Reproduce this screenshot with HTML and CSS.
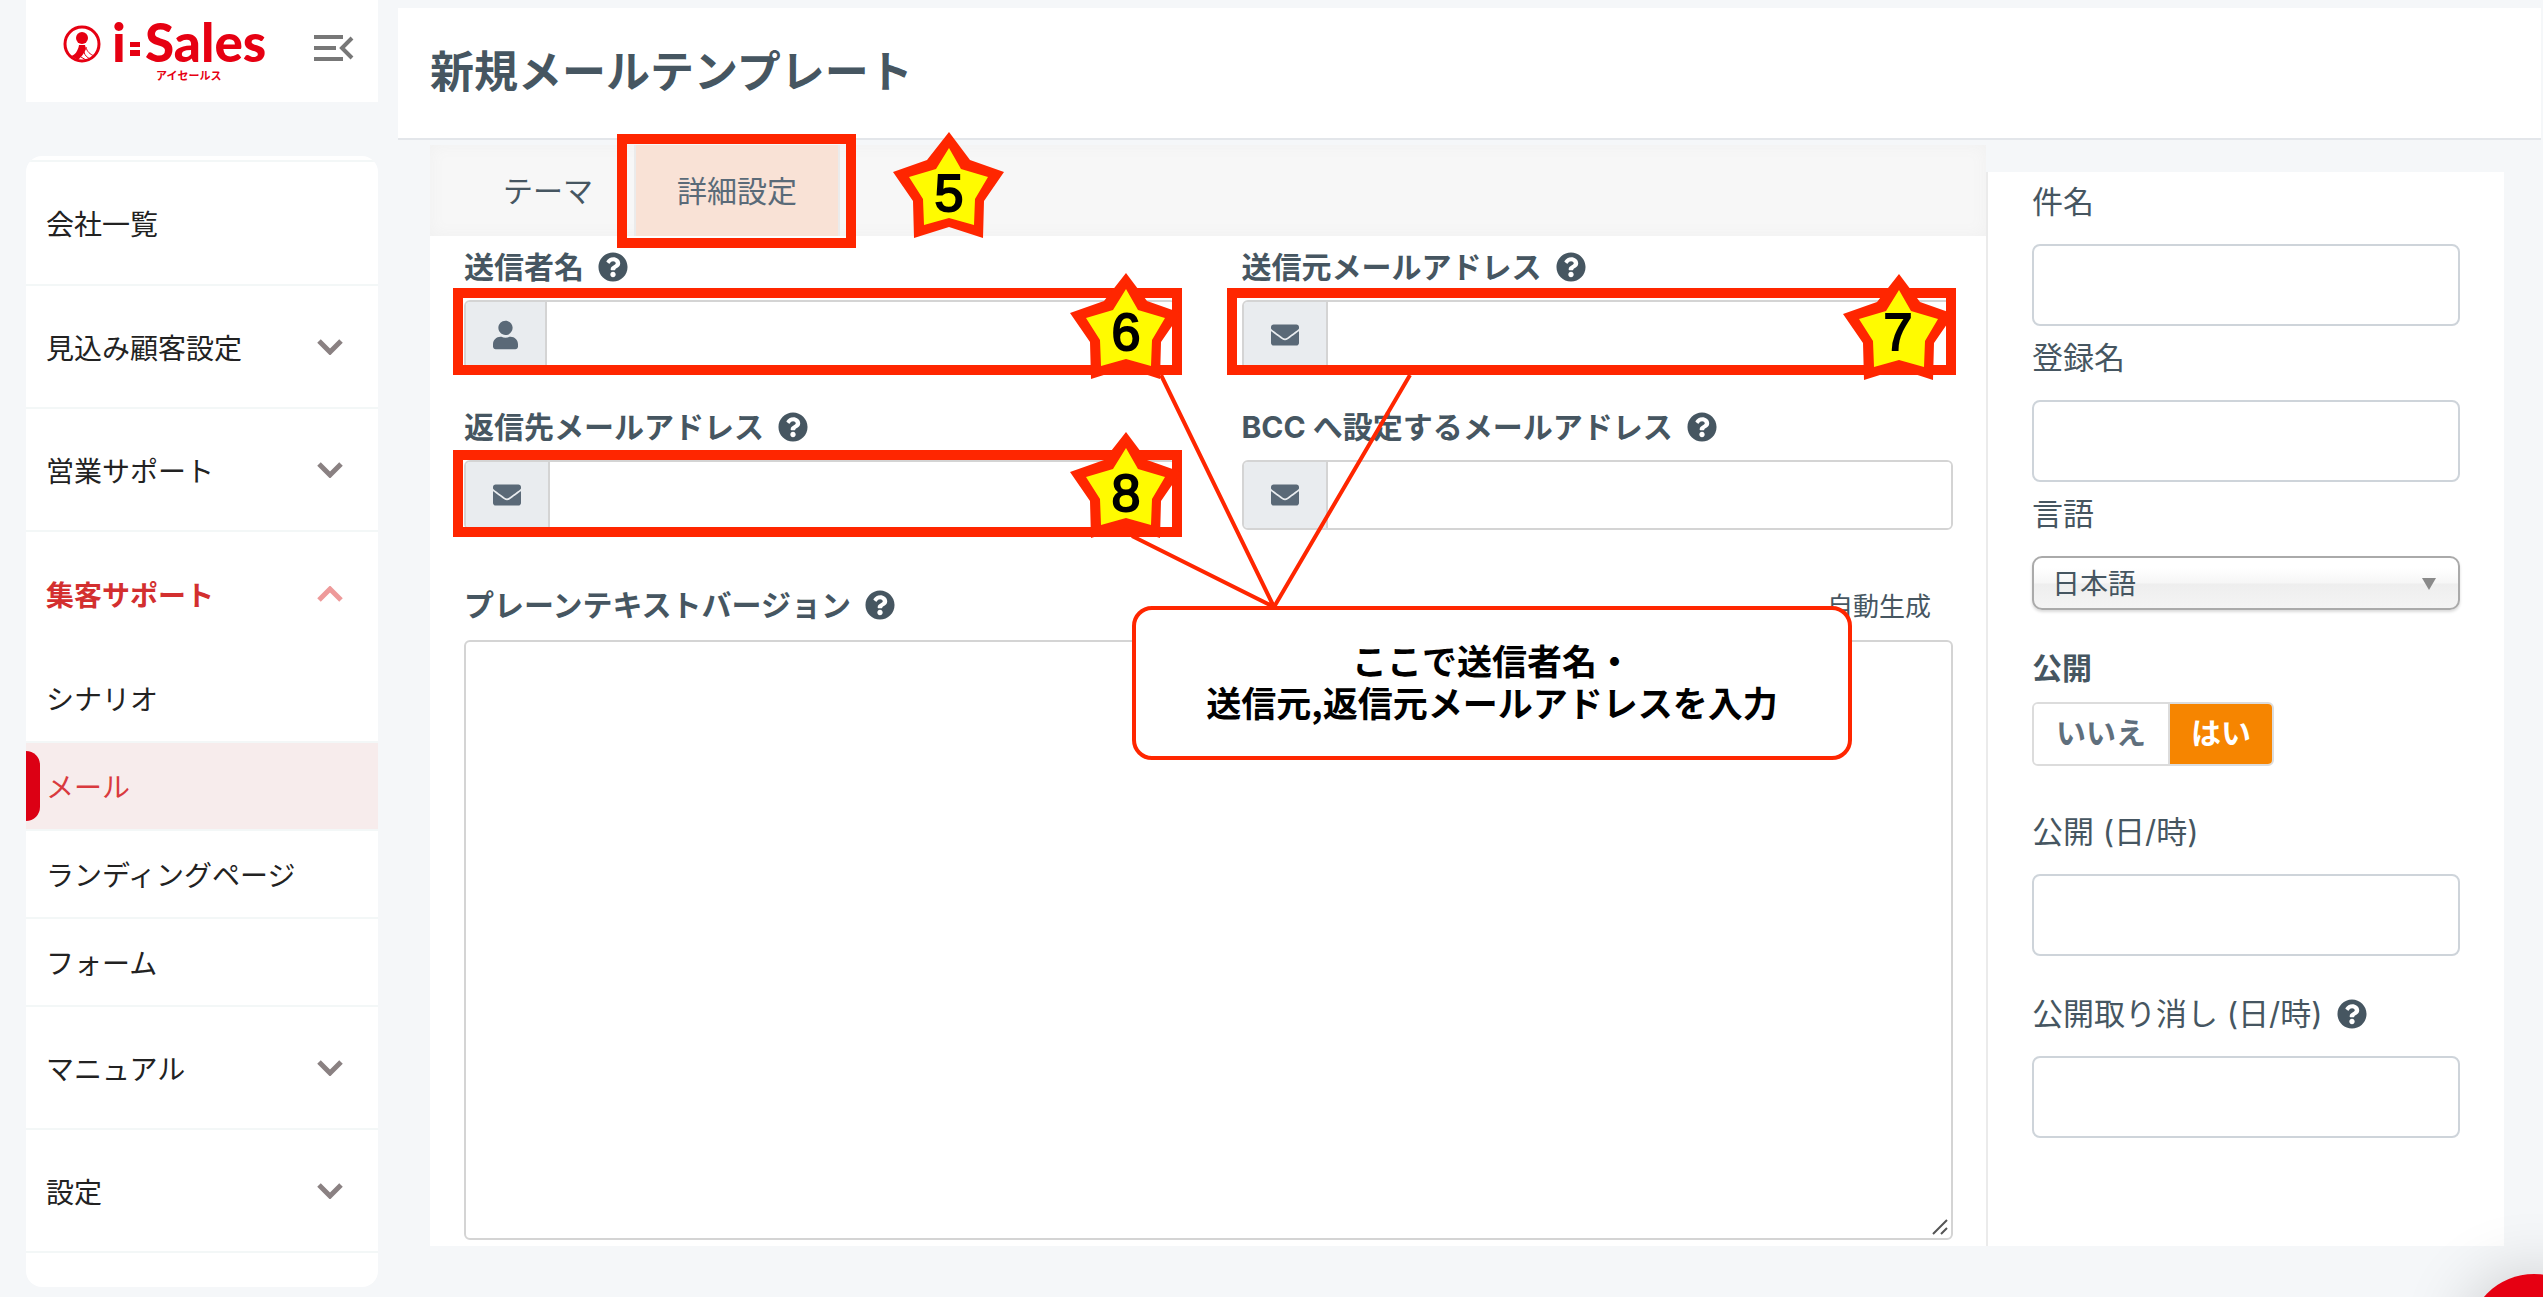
FILE: index.html
```
<!DOCTYPE html>
<html lang="ja">
<head>
    <meta charset="UTF-8">
    <meta name="viewport" content="width=device-width, initial-scale=1.0">
    <title>新規メールテンプレート</title>
    <link rel="stylesheet" href="styles.css">
</head>
<body>
    <!-- shared icons -->
    <svg class="sprite">
        <symbol id="help" viewBox="0 0 512 512">
            <path fill="currentColor" d="M504 256c0 137-111 248-248 248S8 393 8 256 119 8 256 8s248 111 248 248zM262.700 90c-54.500 0-89.300 23-116.500 63.800-3.500 5.300-2.400 12.400 2.700 16.300l34.700 26.300c5.200 3.900 12.600 3 16.700-2.100 17.900-22.700 30.100-35.800 57.300-35.800 20.400 0 45.700 13.100 45.700 33 0 15-12.400 22.700-32.500 34C247.100 238.500 216 254.900 216 296v4c0 6.600 5.400 12 12 12h56c6.600 0 12-5.400 12-12v-1.300c0-28.500 83.200-29.600 83.200-106.700 0-58-60.200-102-116.500-102zM256 338c-25.400 0-46 20.600-46 46s20.600 46 46 46 46-20.600 46-46-20.600-46-46-46z"/>
        </symbol>
        <symbol id="user" viewBox="0 0 448 512">
            <path fill="currentColor" d="M224 256c70.700 0 128-57.300 128-128S294.700 0 224 0 96 57.300 96 128s57.300 128 128 128zm89.600 32h-16.700c-22.200 10.200-46.900 16-72.900 16s-50.600-5.800-72.900-16h-16.700C60.200 288 0 348.200 0 422.400V464c0 26.500 21.500 48 48 48h352c26.500 0 48-21.500 48-48v-41.600c0-74.200-60.200-134.400-134.400-134.400z"/>
        </symbol>
        <symbol id="mail" viewBox="0 64 512 384">
            <path fill="currentColor" d="M502.300 190.800c3.900-3.100 9.700-.2 9.700 4.700V400c0 26.500-21.500 48-48 48H48c-26.500 0-48-21.500-48-48V195.600c0-5 5.700-7.800 9.700-4.700 22.400 17.400 52.100 39.500 154.100 113.600 21.100 15.400 56.700 47.800 92.200 47.600 35.700.3 72-32.800 92.300-47.600 102-74.100 131.600-96.300 154-113.700zM256 320c23.200.4 56.600-29.200 73.400-41.400 132.700-96.300 142.800-104.700 173.400-128.700 5.800-4.500 9.200-11.500 9.200-18.900v-19c0-26.500-21.500-48-48-48H48c-26.500 0-48 21.500-48 48v19c0 7.400 3.400 14.300 9.200 18.900 30.600 23.900 40.700 32.400 173.400 128.700 16.800 12.200 50.200 41.800 73.400 41.400z"/>
        </symbol>
        <symbol id="down" viewBox="0 0 26 16">
            <path fill="none" stroke="currentColor" stroke-width="5" d="M2 2l11 11L24 2"/>
        </symbol>
        <symbol id="up" viewBox="0 0 26 16">
            <path fill="none" stroke="currentColor" stroke-width="5" d="M2 14L13 3l11 11"/>
        </symbol>
        <symbol id="star" viewBox="0 0 112 107">
            <path fill="#ff2600" d="M56 1L77 29l34 12-20 29-1 37-34-11-35 11-1-37L0 41l34-12z"/>
            <path fill="#fffb00" d="M56 17l12 21 27 8-13 22-1 26-25-7-25 7-1-26-14-22 27-8z"/>
        </symbol>
    </svg>

    <div class="layout">
        <aside class="sidebar">
            <div class="brand">
                <svg class="logo" width="212" height="102" viewBox="0 0 212 102">
                    <circle cx="20" cy="44" r="17" fill="none" stroke="#e60012" stroke-width="3"/>
                    <circle cx="20" cy="38" r="6" fill="#e60012"/>
                    <path fill="#e60012" d="M17 45h6l1 4c-2 5-5 8-8 11l-7-4c4-1 7-5 8-11z"/>
                    <path fill="none" stroke="#e60012" stroke-width="1" d="M24 47c1 5 4 7 8 9M22 52c1 4 3 5 6 7M19 57l5 3"/>
                    <text class="logo-name" x="50" y="62">i</text>
                    <path fill="#e60012" d="M68 42h10v5H68zM68 50h10v6H68z"/>
                    <text class="logo-name" x="83" y="62">Sales</text>
                    <text class="logo-kana" x="94" y="80">アイセールス</text>
                </svg>
                <button class="collapse" aria-label="メニューを閉じる">
                    <svg width="40" height="28" viewBox="0 0 40 28">
                        <path fill="none" stroke="#777" stroke-width="4" d="M0 3h29M0 14h22M0 25h29M38 4L28 14l10 10"/>
                    </svg>
                </button>
            </div>
            <nav class="menu">
                <a href="#" class="item">会社一覧</a>
                <a href="#" class="item">見込み顧客設定<svg class="arrow"><use href="#down"/></svg></a>
                <a href="#" class="item">営業サポート<svg class="arrow"><use href="#down"/></svg></a>
                <a href="#" class="item open">集客サポート<svg class="arrow"><use href="#up"/></svg></a>
                <a href="#" class="item sub">シナリオ</a>
                <a href="#" class="item sub active">メール</a>
                <a href="#" class="item sub">ランディングページ</a>
                <a href="#" class="item sub">フォーム</a>
                <a href="#" class="item">マニュアル<svg class="arrow"><use href="#down"/></svg></a>
                <a href="#" class="item">設定<svg class="arrow"><use href="#down"/></svg></a>
            </nav>
        </aside>

        <main class="main">
            <header class="header">
                <h1>新規メールテンプレート</h1>
            </header>
            <div class="content">
                <section class="editor">
                    <div class="tabs">
                        <a href="#" class="tab">テーマ</a>
                        <a href="#" class="tab selected">詳細設定</a>
                    </div>
                    <div class="panel">
                        <div class="fields">
                            <div class="field">
                                <label for="fromName">送信者名 <svg class="help"><use href="#help"/></svg></label>
                                <div class="group">
                                    <span class="addon"><svg class="user"><use href="#user"/></svg></span>
                                    <input type="text" id="fromName">
                                </div>
                            </div>
                            <div class="field">
                                <label for="fromMail">送信元メールアドレス <svg class="help"><use href="#help"/></svg></label>
                                <div class="group">
                                    <span class="addon"><svg class="mail"><use href="#mail"/></svg></span>
                                    <input type="text" id="fromMail">
                                </div>
                            </div>
                            <div class="field">
                                <label for="replyMail">返信先メールアドレス <svg class="help"><use href="#help"/></svg></label>
                                <div class="group">
                                    <span class="addon"><svg class="mail"><use href="#mail"/></svg></span>
                                    <input type="text" id="replyMail">
                                </div>
                            </div>
                            <div class="field">
                                <label for="bccMail">BCC へ設定するメールアドレス <svg class="help"><use href="#help"/></svg></label>
                                <div class="group">
                                    <span class="addon"><svg class="mail"><use href="#mail"/></svg></span>
                                    <input type="text" id="bccMail">
                                </div>
                            </div>
                        </div>
                        <div class="plain-head">
                            <label for="plain">プレーンテキストバージョン <svg class="help"><use href="#help"/></svg></label>
                            <button class="auto">自動生成</button>
                        </div>
                        <div class="plain-box">
                            <textarea id="plain"></textarea>
                            <svg class="grip" width="16" height="16" viewBox="0 0 16 16">
                                <path fill="none" stroke="#555" stroke-width="2" d="M1 15L15 1M9 15l6-6"/>
                            </svg>
                        </div>
                    </div>
                </section>

                <section class="side">
                    <label for="subject">件名</label>
                    <input type="text" id="subject">
                    <label for="entry">登録名</label>
                    <input type="text" id="entry">
                    <label for="lang">言語</label>
                    <div class="select">
                        <select id="lang">
                            <option>日本語</option>
                        </select>
                    </div>
                    <div class="publish">公開</div>
                    <div class="toggle">
                        <button>いいえ</button>
                        <button class="on">はい</button>
                    </div>
                    <label class="date" for="publishUp">公開 (日/時)</label>
                    <input type="text" id="publishUp">
                    <label class="date" for="publishDown">公開取り消し (日/時) <svg class="help"><use href="#help"/></svg></label>
                    <input type="text" id="publishDown">
                </section>
            </div>
        </main>
    </div>

    <button class="chat" aria-label="チャット"></button>

    <!-- step marks drawn over the form -->
    <svg class="marks" width="2000" height="800" viewBox="0 0 2000 800">
        <g fill="none" stroke="#ff2600" stroke-width="10">
            <rect x="622" y="139" width="229" height="104"/>
            <rect x="458" y="293" width="719" height="77"/>
            <rect x="1232" y="293" width="719" height="77"/>
            <rect x="458" y="455" width="719" height="77"/>
        </g>
        <path fill="none" stroke="#ff2600" stroke-width="4" d="M1161 375L1274 607L1410 375M1132 536L1274 607"/>
        <use href="#star" x="893" y="131" width="112" height="107"/>
        <use href="#star" x="1070" y="272" width="112" height="107"/>
        <use href="#star" x="1843" y="273" width="112" height="107"/>
        <use href="#star" x="1070" y="431" width="112" height="107"/>
        <text class="num" x="949" y="211">5</text>
        <text class="num" x="1126" y="350">6</text>
        <text class="num" x="1898" y="350">7</text>
        <text class="num" x="1126" y="511">8</text>
    </svg>
    <div class="callout">ここで送信者名・<br>送信元,返信元メールアドレスを入力</div>
</body>
</html>
```
FILE: styles.css
```
* {
    box-sizing: border-box;
}
body {
    margin: 0;
    background-color: #f5f7f9;
    font-family: "Noto Sans CJK JP", sans-serif;
    font-size: 30px;
    color: #465661;
    position: relative;
    min-height: 100vh;
}
a {
    color: inherit;
    text-decoration: none;
}
input, textarea, select, button {
    font-family: inherit;
    color: inherit;
}
.sprite {
    position: absolute;
    width: 0;
    height: 0;
}
.layout {
    display: flex;
    gap: 20px;
    padding: 0 2px 0 26px;
}

/* sidebar */
.sidebar {
    width: 352px;
    flex-shrink: 0;
}
.brand {
    height: 102px;
    background-color: white;
    display: flex;
    align-items: flex-start;
    justify-content: space-between;
    padding: 0 24px 0 36px;
}
.logo-name {
    font-family: Lato, sans-serif;
    font-weight: 900;
    font-size: 53px;
    fill: #e60012;
}
.logo-kana {
    font-weight: bold;
    font-size: 11px;
    fill: #e60012;
}
.collapse {
    border: none;
    background: none;
    padding: 34px 0 0;
    line-height: 0;
    cursor: pointer;
}
.menu {
    margin-top: 54px;
    padding: 4px 0 34px;
    border-radius: 16px;
    background-color: white;
    overflow: hidden;
    font-size: 28px;
    color: #222;
}
.item {
    position: relative;
    display: flex;
    align-items: center;
    justify-content: space-between;
    height: 123px;
    padding: 0 35px 0 20px;
    border-bottom: 2px solid #f3f7f7;
}
.item:first-child {
    height: 126px;
    border-top: 2px solid #f3f7f7;
}
.arrow {
    width: 26px;
    height: 16px;
    color: #8a8182;
}
.open {
    border-bottom: none;
    font-weight: bold;
    color: #d32f2f;
}
.open .arrow {
    color: #ee9a9a;
}
.sub {
    height: 88px;
}
.active {
    background-color: #f7ecec;
    color: #d93a3e;
}
.active::before {
    content: "";
    position: absolute;
    left: 0;
    top: 8px;
    width: 14px;
    height: 70px;
    border-radius: 0 14px 14px 0;
    background-color: #dc0014;
}

/* header */
.main {
    flex: 1;
    padding-top: 8px;
}
.header {
    height: 132px;
    background-color: white;
    border-bottom: 2px solid #e3e6ea;
    padding: 0 32px 8px;
    display: flex;
    align-items: center;
}
h1 {
    margin: 0;
    font-size: 44px;
    line-height: 64px;
}
.content {
    display: flex;
    padding: 5px 37px 51px 32px;
}
.help {
    width: 30px;
    height: 30px;
}

/* editor */
.editor {
    flex: 1;
    display: flex;
    flex-direction: column;
}
.tabs {
    display: flex;
    height: 91px;
    padding-left: 32px;
    background-color: #f7f7f7;
    box-shadow: inset 0 0 16px #f0f0f0;
}
.tab {
    display: flex;
    align-items: center;
    padding: 0 41px 4px;
}
.selected {
    background-color: #f9e2d6;
    border: 2px solid #ebebeb;
    border-width: 0 2px;
    color: #5a6a78;
}
.panel {
    flex: 1;
    background-color: white;
    padding: 9px 33px 6px 34px;
}
label {
    display: flex;
    align-items: center;
    gap: 14px;
    font-family: Inter, "Noto Sans CJK JP", sans-serif;
    line-height: 44px;
}
.panel label {
    font-weight: bold;
}
.fields {
    display: grid;
    grid-template-columns: 1fr 1fr;
    gap: 35px 66px;
}
.group {
    display: flex;
    height: 70px;
    margin-top: 11px;
    border: 2px solid #d4d4d4;
    border-radius: 6px;
    overflow: hidden;
}
.addon {
    display: flex;
    align-items: center;
    padding: 0 27px;
    background-color: #e9ecef;
    border-right: 2px solid #d4d4d4;
    color: #5a6977;
}
.user {
    width: 25px;
    height: 30px;
}
.mail {
    width: 28px;
    height: 22px;
}
.group input {
    flex: 1;
    border: none;
    padding: 0 16px;
    font-size: 28px;
}
.plain-head {
    display: flex;
    justify-content: space-between;
    margin-top: 53px;
}
.auto {
    border: none;
    background: none;
    padding: 0 22px;
    font-size: 26px;
    line-height: 44px;
}
.plain-box {
    position: relative;
    margin-top: 13px;
}
textarea {
    display: block;
    width: 100%;
    height: 600px;
    padding: 16px;
    border: 2px solid #d4d4d4;
    border-radius: 6px;
    font-size: 28px;
}
textarea::-webkit-resizer {
    background: none;
}
.grip {
    position: absolute;
    right: 5px;
    bottom: 5px;
    pointer-events: none;
}

/* right column */
.side {
    width: 518px;
    margin-top: 27px;
    padding: 8px 44px 96px;
    background-color: white;
    border-left: 2px solid #ebebeb;
}
.side label {
    font-size: 31px;
    margin-top: 10px;
}
.side label:first-child {
    margin-top: 0;
}
.side label.date {
    margin-top: 36px;
}
.side input {
    display: block;
    width: 100%;
    height: 82px;
    margin-top: 20px;
    padding: 0 20px;
    border: 2px solid #ced4da;
    border-radius: 8px;
    font-size: 28px;
}
.select {
    position: relative;
    margin-top: 20px;
}
.select::after {
    content: "";
    position: absolute;
    right: 24px;
    top: 22px;
    border: 7px solid transparent;
    border-top: 12px solid #8a8a8a;
    border-bottom: none;
}
select {
    appearance: none;
    display: block;
    width: 100%;
    height: 54px;
    padding: 0 18px 2px;
    border: 2px solid #aaa;
    border-radius: 10px;
    background: linear-gradient(#fff 20%, #f6f6f6 50%, #eee 52%, #f4f4f4 100%);
    box-shadow: 0 2px 3px rgba(0, 0, 0, 0.15);
    font-size: 28px;
}
.publish {
    margin-top: 36px;
    padding-bottom: 4px;
    font-weight: bold;
    line-height: 40px;
}
.toggle {
    display: flex;
    width: fit-content;
    height: 64px;
    margin: 12px 0 44px;
    border: 2px solid #dcdcdc;
    border-radius: 6px;
    overflow: hidden;
}
.toggle button {
    border: none;
    background-color: white;
    padding: 0 22px 6px;
    font-size: 30px;
    font-weight: bold;
    color: #5f6f7d;
}
.toggle .on {
    border-left: 2px solid #dcdcdc;
    padding: 0 21px 6px;
    background-color: #f68500;
    color: white;
}
.chat {
    position: fixed;
    right: -57px;
    bottom: -109px;
    width: 132px;
    height: 132px;
    border: none;
    border-radius: 50%;
    background-color: #e60012;
    box-shadow: 0 2px 70px rgba(0, 0, 0, 0.2);
}

/* marks */
.marks {
    position: absolute;
    left: 0;
    top: 0;
    pointer-events: none;
}
.num {
    font-family: "Liberation Sans", Arial, sans-serif;
    font-size: 52px;
    stroke: black;
    stroke-width: 2px;
    text-anchor: middle;
}
.callout {
    position: absolute;
    left: 1132px;
    top: 606px;
    width: 720px;
    padding: 29px 0 33px;
    border: 4px solid #ff2600;
    border-radius: 20px;
    background-color: white;
    color: black;
    font-size: 35px;
    font-weight: bold;
    line-height: 42px;
    text-align: center;
}
```
